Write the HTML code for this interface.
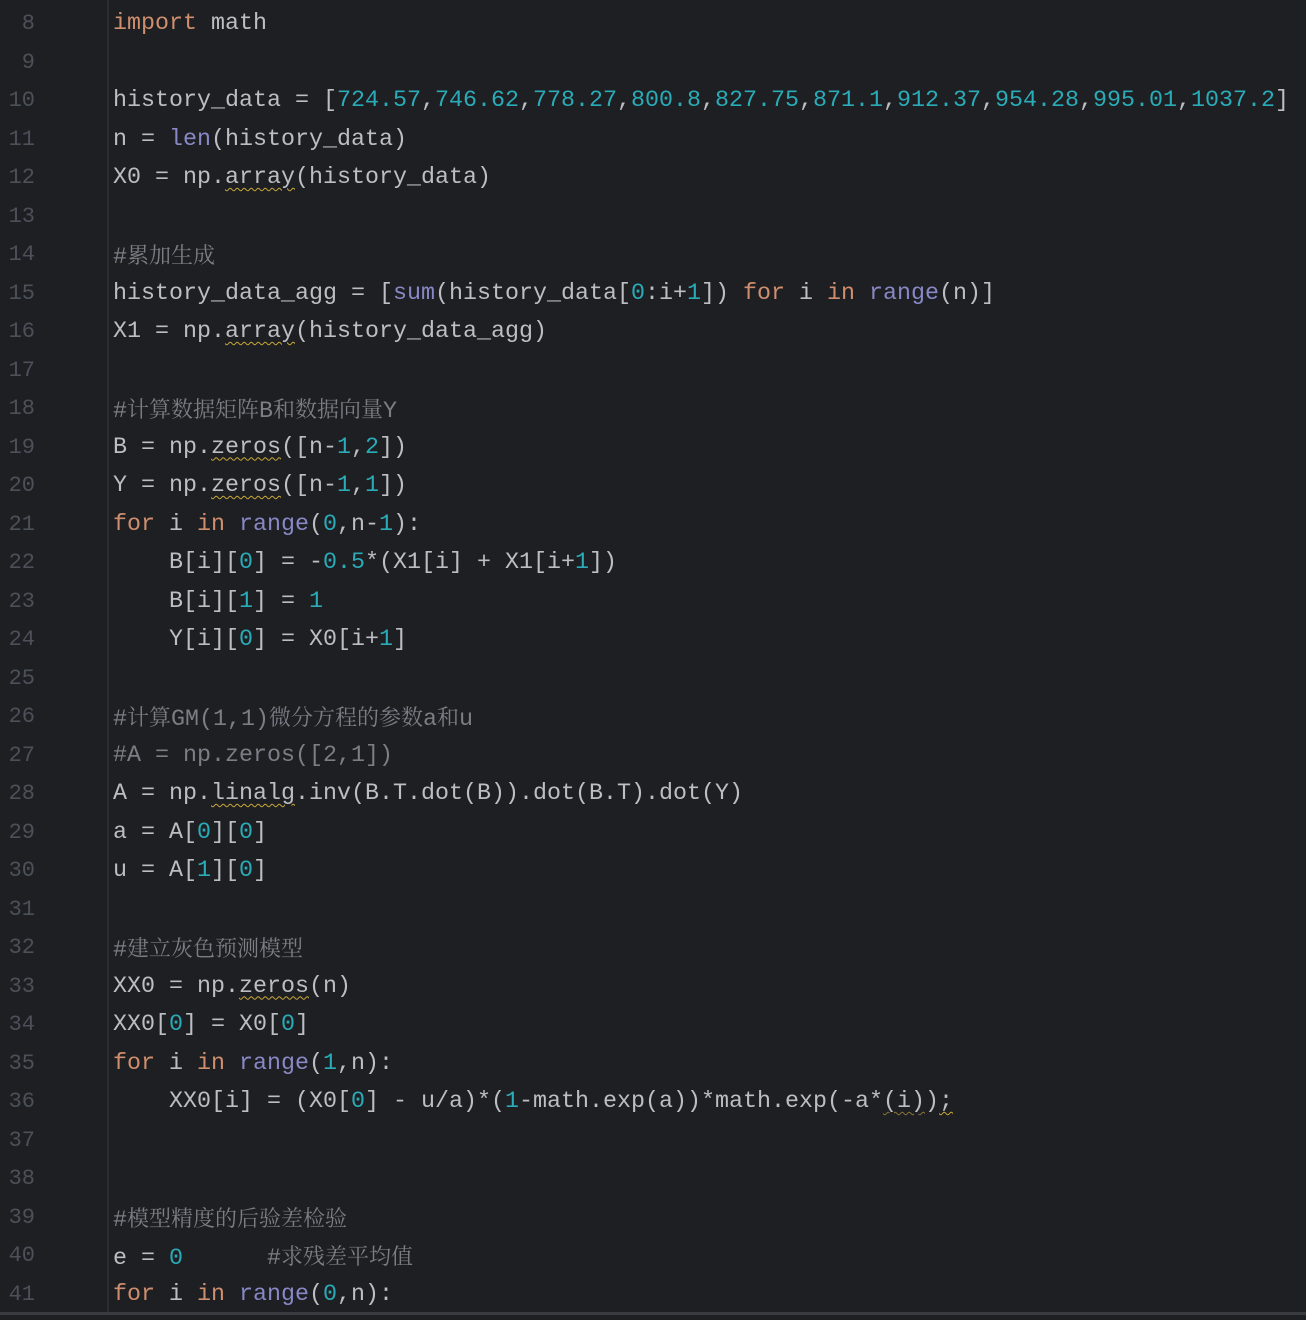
<!DOCTYPE html>
<html><head><meta charset="utf-8">
<style>
html,body{margin:0;padding:0;background:#1e1f22;width:1306px;height:1320px;overflow:hidden;position:relative}
.wrap{position:absolute;left:0;top:2px;width:1306px;height:1310px}
.g{position:absolute;left:107px;top:0;width:2px;height:1313px;background:#2b2d30}
.bot{position:absolute;left:0;top:1312px;width:1306px;height:3px;background:#393b40}
.ln{position:absolute;left:0;width:35px;text-align:right;font-family:"Liberation Mono",monospace;font-size:22px;color:#4b5059;line-height:38.5px}
.l{position:absolute;left:113px;white-space:pre;font-family:"Liberation Mono",monospace;font-size:23.33px;color:#bcbec4;line-height:38.5px}
.k{color:#cf8e6d}.n{color:#2aacb8}.b{color:#8888c6}
.c{color:#7a7e85;font-family:"Liberation Mono","Noto Serif CJK SC",serif}
.c i{font-style:normal;font-family:"Noto Serif CJK SC",serif;font-size:22px}
.w{text-decoration:underline wavy #c9a93a;text-decoration-thickness:1px;text-underline-offset:4px}
.w2{text-decoration:underline wavy #8a7338;text-decoration-thickness:1px;text-underline-offset:4px}
</style></head><body>
<div class="g"></div>
<div class="wrap">
<div class="ln" style="top:3px">8</div>
<div class="ln" style="top:41.5px">9</div>
<div class="ln" style="top:80px">10</div>
<div class="ln" style="top:118.5px">11</div>
<div class="ln" style="top:157px">12</div>
<div class="ln" style="top:195.5px">13</div>
<div class="ln" style="top:234px">14</div>
<div class="ln" style="top:272.5px">15</div>
<div class="ln" style="top:311px">16</div>
<div class="ln" style="top:349.5px">17</div>
<div class="ln" style="top:388px">18</div>
<div class="ln" style="top:426.5px">19</div>
<div class="ln" style="top:465px">20</div>
<div class="ln" style="top:503.5px">21</div>
<div class="ln" style="top:542px">22</div>
<div class="ln" style="top:580.5px">23</div>
<div class="ln" style="top:619px">24</div>
<div class="ln" style="top:657.5px">25</div>
<div class="ln" style="top:696px">26</div>
<div class="ln" style="top:734.5px">27</div>
<div class="ln" style="top:773px">28</div>
<div class="ln" style="top:811.5px">29</div>
<div class="ln" style="top:850px">30</div>
<div class="ln" style="top:888.5px">31</div>
<div class="ln" style="top:927px">32</div>
<div class="ln" style="top:965.5px">33</div>
<div class="ln" style="top:1004px">34</div>
<div class="ln" style="top:1042.5px">35</div>
<div class="ln" style="top:1081px">36</div>
<div class="ln" style="top:1119.5px">37</div>
<div class="ln" style="top:1158px">38</div>
<div class="ln" style="top:1196.5px">39</div>
<div class="ln" style="top:1235px">40</div>
<div class="ln" style="top:1273.5px">41</div>

<div class="l" style="top:3px"><span class="k">import</span> math</div>
<div class="l" style="top:80px">history_data = [<span class="n">724.57</span>,<span class="n">746.62</span>,<span class="n">778.27</span>,<span class="n">800.8</span>,<span class="n">827.75</span>,<span class="n">871.1</span>,<span class="n">912.37</span>,<span class="n">954.28</span>,<span class="n">995.01</span>,<span class="n">1037.2</span>]</div>
<div class="l" style="top:118.5px">n = <span class="b">len</span>(history_data)</div>
<div class="l" style="top:157px">X0 = np.<span class="w">array</span>(history_data)</div>
<div class="l c" style="top:234px">#<i>累加生成</i></div>
<div class="l" style="top:272.5px">history_data_agg = [<span class="b">sum</span>(history_data[<span class="n">0</span>:i+<span class="n">1</span>]) <span class="k">for</span> i <span class="k">in</span> <span class="b">range</span>(n)]</div>
<div class="l" style="top:311px">X1 = np.<span class="w">array</span>(history_data_agg)</div>
<div class="l c" style="top:388px">#<i>计算数据矩阵</i>B<i>和数据向量</i>Y</div>
<div class="l" style="top:426.5px">B = np.<span class="w">zeros</span>([n-<span class="n">1</span>,<span class="n">2</span>])</div>
<div class="l" style="top:465px">Y = np.<span class="w">zeros</span>([n-<span class="n">1</span>,<span class="n">1</span>])</div>
<div class="l" style="top:503.5px"><span class="k">for</span> i <span class="k">in</span> <span class="b">range</span>(<span class="n">0</span>,n-<span class="n">1</span>):</div>
<div class="l" style="top:542px">    B[i][<span class="n">0</span>] = -<span class="n">0.5</span>*(X1[i] + X1[i+<span class="n">1</span>])</div>
<div class="l" style="top:580.5px">    B[i][<span class="n">1</span>] = <span class="n">1</span></div>
<div class="l" style="top:619px">    Y[i][<span class="n">0</span>] = X0[i+<span class="n">1</span>]</div>
<div class="l c" style="top:696px">#<i>计算</i>GM(1,1)<i>微分方程的参数</i>a<i>和</i>u</div>
<div class="l c" style="top:734.5px">#A = np.zeros([2,1])</div>
<div class="l" style="top:773px">A = np.<span class="w">linalg</span>.inv(B.T.dot(B)).dot(B.T).dot(Y)</div>
<div class="l" style="top:811.5px">a = A[<span class="n">0</span>][<span class="n">0</span>]</div>
<div class="l" style="top:850px">u = A[<span class="n">1</span>][<span class="n">0</span>]</div>
<div class="l c" style="top:927px">#<i>建立灰色预测模型</i></div>
<div class="l" style="top:965.5px">XX0 = np.<span class="w">zeros</span>(n)</div>
<div class="l" style="top:1004px">XX0[<span class="n">0</span>] = X0[<span class="n">0</span>]</div>
<div class="l" style="top:1042.5px"><span class="k">for</span> i <span class="k">in</span> <span class="b">range</span>(<span class="n">1</span>,n):</div>
<div class="l" style="top:1081px">    XX0[i] = (X0[<span class="n">0</span>] - u/a)*(<span class="n">1</span>-math.exp(a))*math.exp(-a*<span class="w2">(i)</span>)<span class="w">;</span></div>
<div class="l c" style="top:1196.5px">#<i>模型精度的后验差检验</i></div>
<div class="l" style="top:1235px">e = <span class="n">0</span>      <span class="c">#<i>求残差平均值</i></span></div>
<div class="l" style="top:1273.5px"><span class="k">for</span> i <span class="k">in</span> <span class="b">range</span>(<span class="n">0</span>,n):</div>
</div>
<div class="bot"></div>
</body></html>
